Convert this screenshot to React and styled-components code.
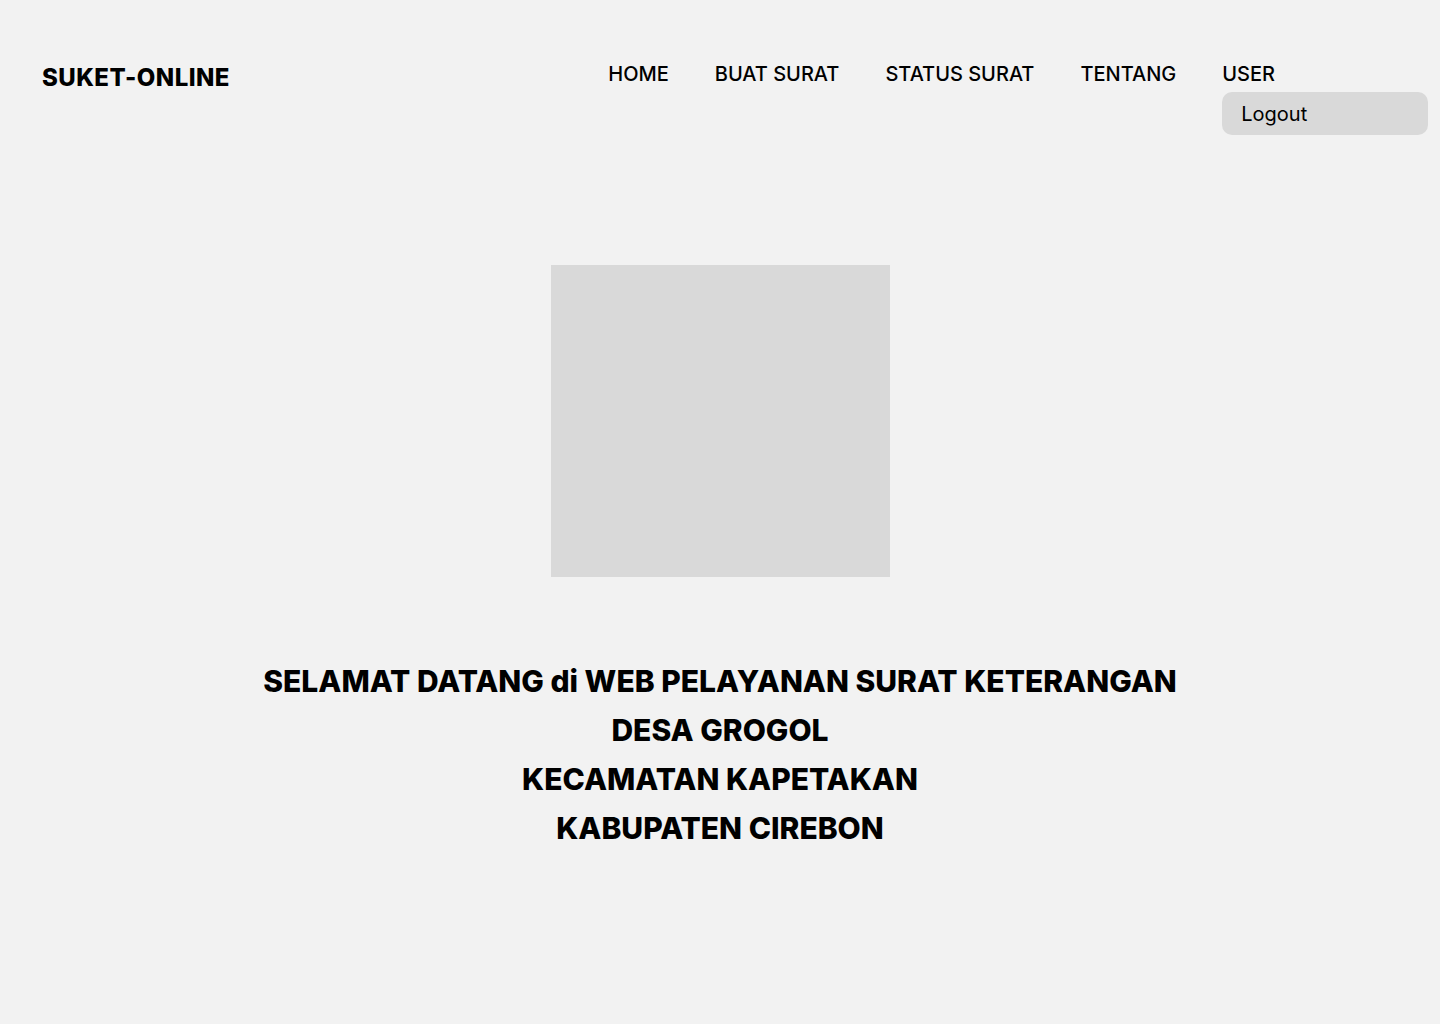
import styled, { createGlobalStyle } from 'styled-components'

const navItems = ['HOME', 'BUAT SURAT', 'STATUS SURAT', 'TENTANG']

const GlobalStyle = createGlobalStyle`
  html, body {
    margin: 0;
    padding: 0;
    background: #f2f2f2;
    font-family: Inter, "Liberation Sans", sans-serif;
    color: #000;
  }
`

function App() {
  return (
    <Page>
      <GlobalStyle />
      <Header>
        <Logo>SUKET-ONLINE</Logo>
        <Nav>
          {navItems.map((item) => (
            <NavLink key={item}>{item}</NavLink>
          ))}
          <UserMenu>
            <NavLink>USER</NavLink>
            <Dropdown>
              <DropdownItem>Logout</DropdownItem>
            </Dropdown>
          </UserMenu>
        </Nav>
      </Header>
      <Hero>
        <Picture />
        <Welcome>
          SELAMAT DATANG di WEB PELAYANAN SURAT KETERANGAN
          <br />
          DESA GROGOL
          <br />
          KECAMATAN KAPETAKAN
          <br />
          KABUPATEN CIREBON
        </Welcome>
      </Hero>
    </Page>
  )
}

export default App

const Page = styled.div`
  min-height: 1024px;
  background: #f2f2f2;
`

const Header = styled.header`
  display: flex;
  align-items: flex-start;
  padding: 60px 165px 0 42px;
`

const Logo = styled.div`
  font-size: 24px;
  font-weight: 800;
  line-height: 34px;
  letter-spacing: 0.45px;
  margin-top: 1px;
`

const Nav = styled.nav`
  display: flex;
  align-items: flex-start;
  gap: 46px;
  margin-left: auto;
`

const NavLink = styled.a`
  font-size: 20px;
  font-weight: 500;
  line-height: 28px;
  cursor: pointer;
`

const UserMenu = styled.div`
  position: relative;
`

const Dropdown = styled.div`
  position: absolute;
  top: 32px;
  left: 0;
  width: 206px;
  height: 43px;
  background: #d9d9d9;
  border-radius: 10px;
  display: flex;
  align-items: center;
  padding-left: 19px;
  box-sizing: border-box;
`

const DropdownItem = styled.span`
  font-size: 20px;
  font-weight: 400;
`

const Hero = styled.main`
  display: flex;
  flex-direction: column;
  align-items: center;
  padding-top: 170px;
`

const Picture = styled.div`
  width: 339px;
  height: 312px;
  background: #d9d9d9;
`

const Welcome = styled.h1`
  margin: 80px 0 0;
  font-size: 30px;
  font-weight: 800;
  line-height: 49px;
  text-align: center;
`
